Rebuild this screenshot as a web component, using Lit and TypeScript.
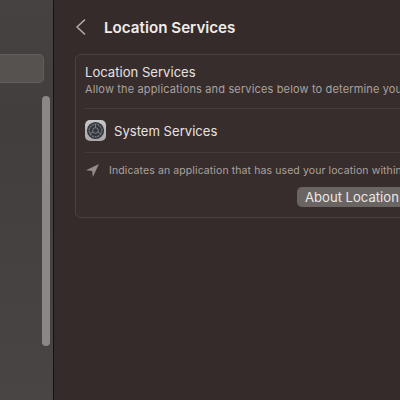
import { LitElement, html, css } from "lit";
import { customElement } from "lit/decorators.js";

@customElement("app-root")
export class AppRoot extends LitElement {
  static styles = css`
    :host {
      display: flex;
      width: 400px;
      height: 400px;
      overflow: hidden;
      background: #352b2a;
      font-family: Inter, "Liberation Sans", sans-serif;
      color: #e9e5e3;
    }
    .sidebar {
      position: relative;
      flex: none;
      width: 53px;
      height: 400px;
      background: linear-gradient(180deg, #464241 0%, #423e3d 30%, #484544 100%);
      padding-top: 54px;
      box-sizing: border-box;
    }
    .selected {
      width: 44px;
      height: 29px;
      box-sizing: border-box;
      background: #565250;
      border: 1px solid #625e5c;
      border-left: none;
      border-radius: 0 5px 5px 0;
    }
    .thumb {
      position: absolute;
      left: 42px;
      top: 96px;
      width: 8px;
      height: 250px;
      border-radius: 4px;
      background: #8b8786;
    }
    .divider {
      flex: none;
      width: 1px;
      height: 400px;
      background: #151212;
    }
    .main {
      flex: none;
      width: 346px;
      padding: 0 0 0 21px;
      box-sizing: border-box;
    }
    .header {
      display: flex;
      align-items: center;
      height: 54px;
      gap: 18px;
    }
    .chev {
      display: block;
      width: 11px;
      height: 18px;
    }
    .title {
      font-size: 15.2px;
      font-weight: 600;
      color: #f0ecea;
      white-space: nowrap;
    }
    .card {
      width: 480px;
      height: 164px;
      box-sizing: border-box;
      border: 1px solid #4b4240;
      border-radius: 6px;
      background: #372d2c;
      padding: 0 9px;
    }
    .intro {
      height: 54px;
      box-sizing: border-box;
      padding-top: 9px;
      border-bottom: 1px solid #453c3a;
    }
    .h {
      font-size: 13.1px;
      line-height: 17px;
      color: #e6e2e0;
      white-space: nowrap;
    }
    .sub {
      font-size: 11px;
      line-height: 14px;
      margin-top: 1px;
      letter-spacing: 0.15px;
      color: #aaa29f;
      white-space: nowrap;
    }
    .row {
      display: flex;
      align-items: center;
      gap: 8px;
      height: 44px;
      box-sizing: border-box;
      border-bottom: 1px solid #453c3a;
      font-size: 13.1px;
      color: #e6e2e0;
    }
    .app-icon {
      display: block;
      width: 21px;
      height: 21px;
    }
    .note {
      display: flex;
      align-items: center;
      gap: 9px;
      height: 34px;
      font-size: 10.5px;
      letter-spacing: 0.1px;
      color: #aaa29f;
      white-space: nowrap;
    }
    .loc {
      display: block;
      width: 15px;
      height: 15px;
      flex: none;
    }
    .actions {
      display: flex;
      padding-left: 212px;
    }
    .btn {
      flex: none;
      height: 20px;
      line-height: 20px;
      border-radius: 5px;
      background: #6a6462;
      padding: 0 8px;
      font-size: 13.1px;
      color: #ece8e6;
      white-space: nowrap;
    }
  `;

  render() {
    return html`
      <div class="sidebar">
        <div class="selected"></div>
        <div class="thumb"></div>
      </div>
      <div class="divider"></div>
      <div class="main">
        <div class="header">
          <svg class="chev" viewBox="0 0 11 18" fill="none" stroke="#b5aeab" stroke-width="1.6" stroke-linecap="round" stroke-linejoin="round">
            <path d="M9.5 2 L2 9 L9.5 16" />
          </svg>
          <div class="title">Location Services</div>
        </div>
        <div class="card">
          <div class="intro">
            <div class="h">Location Services</div>
            <div class="sub">Allow the applications and services below to determine your location.</div>
          </div>
          <div class="row">
            <svg class="app-icon" viewBox="0 0 21 21">
              <defs>
                <linearGradient id="g" x1="0" y1="0" x2="0" y2="1">
                  <stop offset="0" stop-color="#c8c8c8" />
                  <stop offset="1" stop-color="#a8a8a8" />
                </linearGradient>
              </defs>
              <rect x="0" y="0" width="21" height="21" rx="5" fill="url(#g)" />
              <circle cx="10.5" cy="10.5" r="8.6" fill="#33373b" />
              <circle cx="10.5" cy="10.5" r="6.3" fill="none" stroke="#70747a" stroke-width="1.5" stroke-dasharray="2 0.8" />
              <circle cx="10.5" cy="10.5" r="2.8" fill="none" stroke="#80848a" stroke-width="1" />
              <path d="M10.5 7.7 V4.2 M12.9 11.9 L16.2 13.8 M8.1 11.9 L4.8 13.8" stroke="#80848a" stroke-width="1" />
            </svg>
            <span>System Services</span>
          </div>
          <div class="note">
            <svg class="loc" viewBox="0 0 15 15">
              <path d="M14 1 L1 7.3 L7.2 7.9 L7.8 14 Z" fill="#938c8a" />
            </svg>
            <span>Indicates an application that has used your location within the last 24 hours.</span>
          </div>
          <div class="actions">
            <span class="btn">About Location Services…</span>
          </div>
        </div>
      </div>
    `;
  }
}
